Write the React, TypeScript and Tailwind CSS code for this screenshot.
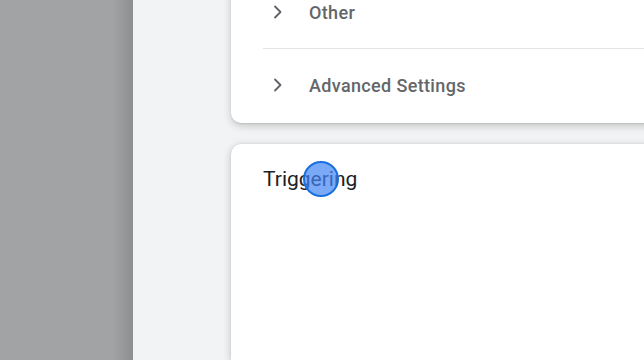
import React from "react";

function Chevron() {
  return (
    <svg width="24" height="24" viewBox="0 0 24 24" className="shrink-0">
      <path d="M9 6.5l5.5 5.5L9 17.5" fill="none" stroke="#5f6368" strokeWidth="1.8" strokeLinecap="round" strokeLinejoin="round" />
    </svg>
  );
}

function Row({ label }: { label: string }) {
  return (
    <div className="flex h-[72px] items-center pl-[3px]">
      <Chevron />
      <span className="ml-[19px] text-[18px] font-medium tracking-[0.35px] text-[#636669]" style={{ fontFamily: "Roboto, 'Liberation Sans', sans-serif" }}>
        {label}
      </span>
    </div>
  );
}

export default function App() {
  return (
    <div className="flex h-[360px] w-[644px] overflow-hidden">
      <div className="h-full w-[133px] shrink-0 bg-gradient-to-r from-[#a2a3a5] from-85% to-[#8d8e90]" />
      <div className="relative flex h-full flex-1 flex-col overflow-hidden bg-[#f1f3f4] pl-[98px]">
        <div className="-mr-[30px] -mt-[24px] rounded-[10px] bg-white pl-[32px] shadow-[0_3px_8px_rgba(0,0,0,0.18),0_1px_2px_rgba(0,0,0,0.1)]">
          <Row label="Other" />
          <div className="h-px bg-[#e3e4e6]" />
          <Row label="Advanced Settings" />
          <div className="h-[2px]" />
        </div>
        <div className="-mr-[30px] mt-[21px] flex-1 rounded-t-[10px] bg-white pl-[32px] pt-[23px] shadow-[0_2px_8px_rgba(0,0,0,0.2),0_0_2px_rgba(0,0,0,0.1)]">
          <div className="relative inline-block">
            <span className="text-[21px] leading-[25px] text-[#202124]" style={{ fontFamily: "Roboto, 'Liberation Sans', sans-serif" }}>
              Triggering
            </span>
            <div className="absolute left-[40px] top-[-6px] h-[36px] w-[36px] rounded-full border-2 border-[#1a6fe0] bg-[#4285f4]/70" />
          </div>
        </div>
      </div>
    </div>
  );
}
